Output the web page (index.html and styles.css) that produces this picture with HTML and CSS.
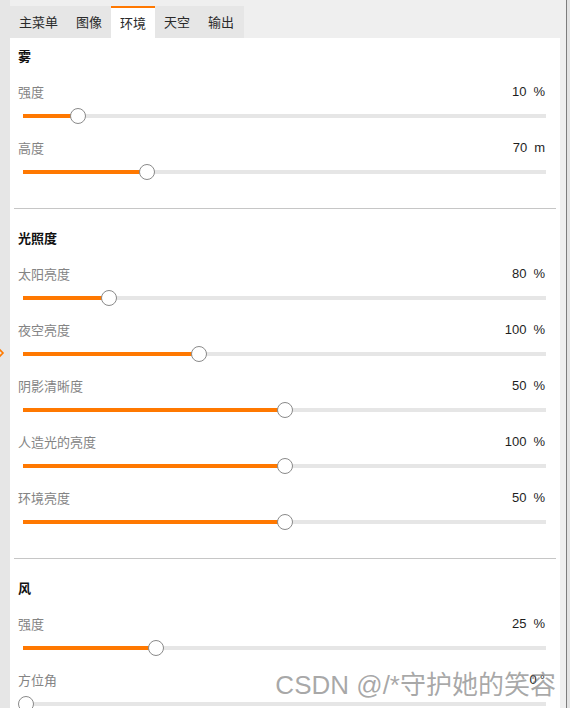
FILE: index.html
```html
<html>
<head>
<title>环境设置</title>
<link rel="stylesheet" href="styles.css">
</head>
<body>
<div class="app">
    <div class="strip">
        <svg class="marker" width="6" height="10" viewBox="0 0 6 10"><polyline points="-1,1 3,5 -1,9" fill="none" stroke="#ff7a00" stroke-width="1.6"/></svg>
    </div>
    <div class="main">
        <div class="tabs">
            <div class="tab">主菜单</div>
            <div class="tab">图像</div>
            <div class="tab active">环境</div>
            <div class="tab">天空</div>
            <div class="tab">输出</div>
        </div>

        <div class="panel">
            <div class="section first">
                <div class="title">雾</div>
                <div class="row">
                    <div class="head"><span class="label">强度</span><span class="value">10<span class="unit">%</span></span></div>
                    <div class="slider"><div class="track"></div><div class="range"><div class="fill" style="width: 10%"></div><div class="thumb" style="left: 10%"></div></div></div>
                </div>
                <div class="row">
                    <div class="head"><span class="label">高度</span><span class="value">70<span class="unit">m</span></span></div>
                    <div class="slider"><div class="track"></div><div class="range"><div class="fill" style="width: 23.3%"></div><div class="thumb" style="left: 23.3%"></div></div></div>
                </div>
            </div>

            <div class="section">
                <div class="title">光照度</div>
                <div class="row">
                    <div class="head"><span class="label">太阳亮度</span><span class="value">80<span class="unit">%</span></span></div>
                    <div class="slider"><div class="track"></div><div class="range"><div class="fill" style="width: 16%"></div><div class="thumb" style="left: 16%"></div></div></div>
                </div>
                <div class="row">
                    <div class="head"><span class="label">夜空亮度</span><span class="value">100<span class="unit">%</span></span></div>
                    <div class="slider"><div class="track"></div><div class="range"><div class="fill" style="width: 33.4%"></div><div class="thumb" style="left: 33.4%"></div></div></div>
                </div>
                <div class="row">
                    <div class="head"><span class="label">阴影清晰度</span><span class="value">50<span class="unit">%</span></span></div>
                    <div class="slider"><div class="track"></div><div class="range"><div class="fill" style="width: 50%"></div><div class="thumb" style="left: 50%"></div></div></div>
                </div>
                <div class="row">
                    <div class="head"><span class="label">人造光的亮度</span><span class="value">100<span class="unit">%</span></span></div>
                    <div class="slider"><div class="track"></div><div class="range"><div class="fill" style="width: 50%"></div><div class="thumb" style="left: 50%"></div></div></div>
                </div>
                <div class="row">
                    <div class="head"><span class="label">环境亮度</span><span class="value">50<span class="unit">%</span></span></div>
                    <div class="slider"><div class="track"></div><div class="range"><div class="fill" style="width: 50%"></div><div class="thumb" style="left: 50%"></div></div></div>
                </div>
            </div>

            <div class="section">
                <div class="title">风</div>
                <div class="row">
                    <div class="head"><span class="label">强度</span><span class="value">25<span class="unit">%</span></span></div>
                    <div class="slider"><div class="track"></div><div class="range"><div class="fill" style="width: 25%"></div><div class="thumb" style="left: 25%"></div></div></div>
                </div>
                <div class="row">
                    <div class="head"><span class="label">方位角</span><span class="value">0<span class="unit deg">°</span></span></div>
                    <div class="slider"><div class="track"></div><div class="range"><div class="fill" style="width: 0%"></div><div class="thumb" style="left: 0%"></div></div></div>
                </div>
            </div>
        </div>
    </div>
    <div class="edge"></div>
    <div class="watermark">CSDN @/*守护她的笑容</div>
</div>
</body>
</html>
```

FILE: styles.css
```css
body {
    margin: 0;
    padding: 0;
    background-color: #efefef;
    font-family: "Liberation Sans", "Noto Sans CJK SC", sans-serif;
    font-size: 13px;
}

.app {
    position: relative;
    display: flex;
    height: 708px;
    overflow: hidden;
}

.strip {
    position: relative;
    width: 10px;
    background: #e6e6e6;
}

.marker {
    position: absolute;
    left: 0;
    top: 348px;
}

.main {
    width: 550px;
    padding: 6px 6px 0 0;
    background: #efefef;
}

.edge {
    flex: 1;
    background: #e3e3e3;
    border-left: 1px solid #7d7d7d;
}

.tabs {
    display: flex;
    width: 234px;
    height: 32px;
    background: #e6e6e6;
}

.tab {
    padding: 0 9px;
    line-height: 32px;
    color: #2a2a2a;
    font-family: "Noto Sans CJK SC", sans-serif;
}

.tab.active {
    background: white;
    border-top: 2px solid #ff7800;
    line-height: 30px;
}

.panel {
    background: white;
    height: 680px;
}

.section {
    padding: 19px 0 14px;
    border-bottom: 1px solid #c6c6c6;
    margin: 0 4px;
}

.section.first {
    padding-top: 8px;
}

.title {
    height: 20px;
    line-height: 20px;
    margin: 0 0 16px 4px;
    font-weight: bold;
    color: #111;
    font-family: "Noto Sans CJK SC", sans-serif;
}

.row {
    height: 56px;
}

.head {
    display: flex;
    justify-content: space-between;
    align-items: center;
    height: 18px;
    padding: 0 11px 0 4px;
}

.label {
    color: #848484;
    font-family: "Noto Sans CJK SC", sans-serif;
}

.value {
    color: #1e1e1e;
}

.unit {
    margin-left: 7px;
}

.unit.deg {
    margin-left: 3px;
}

.slider {
    position: relative;
    height: 20px;
    margin: 6px 10px 0 9px;
}

.track {
    position: absolute;
    left: 0;
    right: 0;
    top: 8px;
    height: 4px;
    background: #e6e6e6;
}

.range {
    position: absolute;
    left: 3px;
    right: 2px;
    top: 0;
    bottom: 0;
}

.fill {
    position: absolute;
    left: -3px;
    top: 8px;
    height: 4px;
    background: #ff7800;
    box-sizing: content-box;
    padding-left: 3px;
}

.thumb {
    position: absolute;
    top: 2px;
    width: 14px;
    height: 14px;
    margin-left: -8px;
    background: white;
    border: 1px solid #8a8a8a;
    border-radius: 50%;
}

.watermark {
    position: absolute;
    right: 14px;
    bottom: 8px;
    font-size: 26px;
    line-height: 30px;
    color: rgba(110, 110, 110, 0.6);
    white-space: nowrap;
}
```
